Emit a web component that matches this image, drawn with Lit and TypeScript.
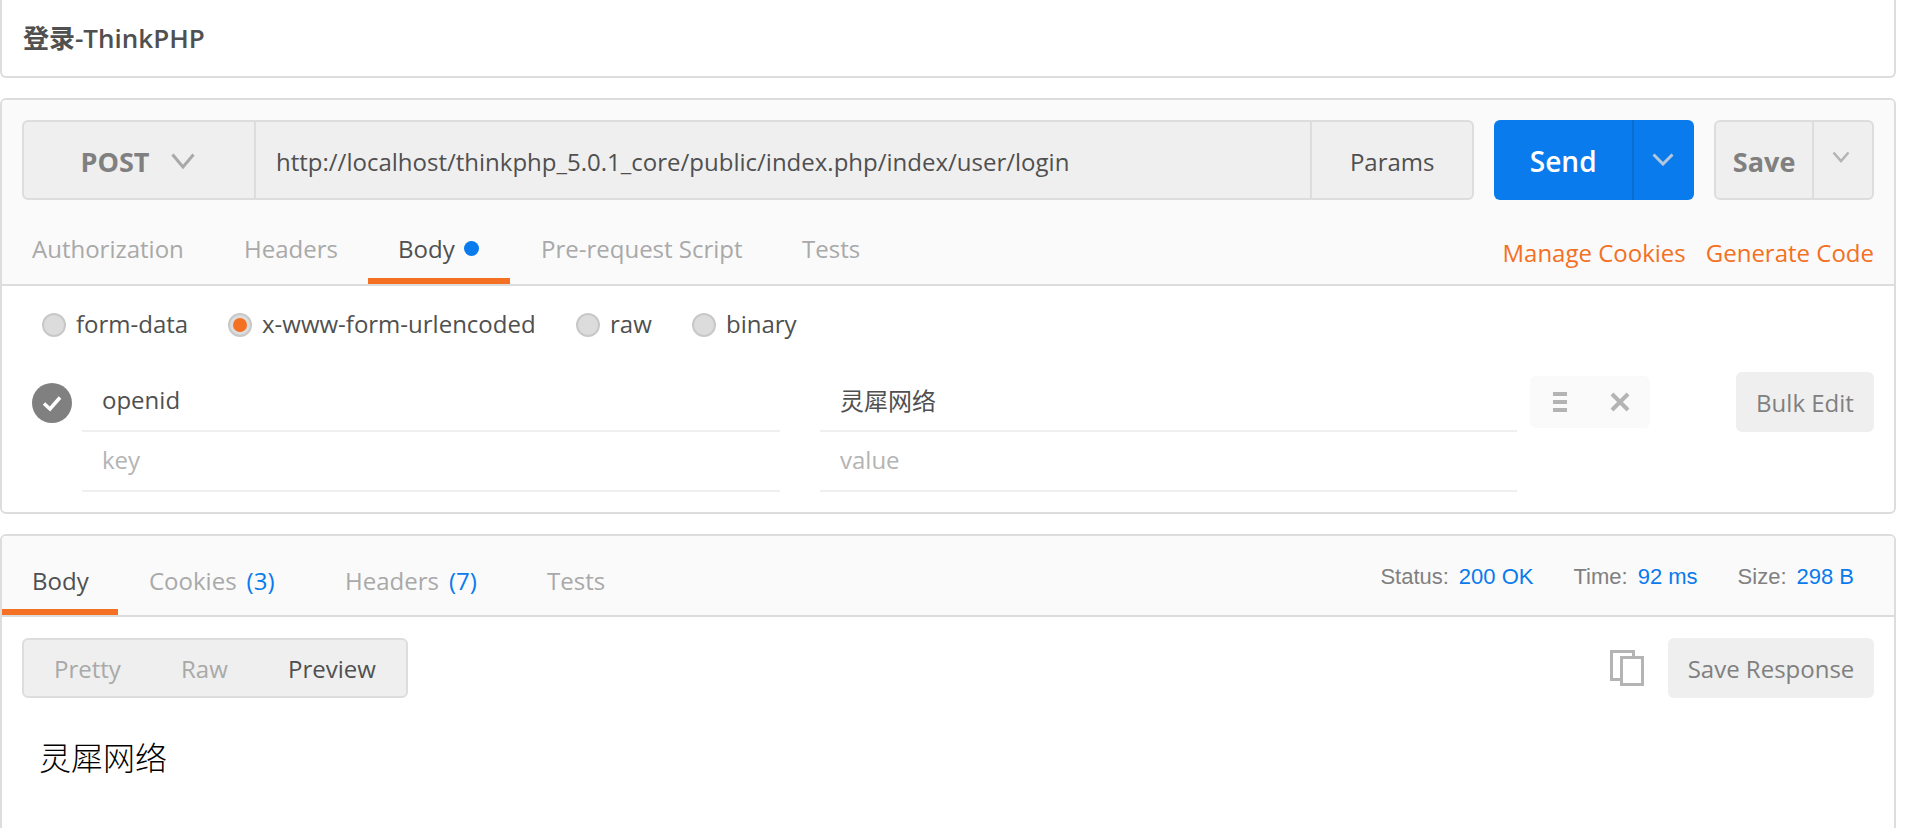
import { LitElement, html, css } from "lit";
import { customElement } from "lit/decorators.js";

const chev = (c: string, w: number, h: number, sw: number) => html`<svg width=${w} height=${h} viewBox="0 0 ${w} ${h}"><path d="M1.5 1.5 L${w / 2} ${h - 2} L${w - 1.5} 1.5" fill="none" stroke=${c} stroke-width=${sw}/></svg>`;

@customElement("app-root")
export class AppRoot extends LitElement {
  static styles = css`
    :host { display: block; width: 1918px; height: 828px; overflow: hidden; background: #fff; font-family: "Open Sans", "Noto Sans CJK SC", sans-serif; font-size: 24px; color: #505050; }
    * { box-sizing: border-box; }
    .page { width: 1896px; display: flex; flex-direction: column; gap: 20px; }
    .card { border: 2px solid #ddd; border-radius: 6px; }
    .title { height: 78px; border-top: none; border-top-left-radius: 0; border-top-right-radius: 0; padding-left: 21px; display: flex; align-items: center; font-size: 26px; font-weight: 600; color: #505050; padding-bottom: 3px; }
    .req { height: 416px; }
    .head { height: 186px; background: #fafafa; border-bottom: 2px solid #ddd; padding: 20px 20px 0 20px; border-radius: 4px 4px 0 0; }
    .bar { display: flex; height: 80px; }
    .urlbox { width: 1453px; display: flex; background: #efefef; border: 2px solid #ddd; border-radius: 6px; }
    .method { width: 232px; border-right: 2px solid #ddd; display: flex; align-items: center; justify-content: center; gap: 22px; font-size: 27px; font-weight: 700; color: #808080; padding: 2px 2px 0 0; }
    .url { flex: 1; display: flex; align-items: center; padding: 2px 0 0 20px; }
    .params { width: 162px; border-left: 2px solid #ddd; display: flex; align-items: center; justify-content: center; padding-top: 2px; }
    .send { margin-left: 20px; width: 200px; display: flex; background: #097bed; border-radius: 6px; color: #fff; font-weight: 600; font-size: 28px; }
    .send .l { width: 140px; display: flex; align-items: center; justify-content: center; border-right: 2px solid #0a6ed0; padding-top: 2px; }
    .send .r { flex: 1; display: flex; align-items: center; justify-content: center; padding: 0 2px 2px 0; }
    .save { margin-left: 20px; width: 160px; display: flex; background: #efefef; border: 2px solid #ddd; border-radius: 6px; color: #808080; font-weight: 700; font-size: 27px; }
    .save .l { width: 98px; display: flex; align-items: center; justify-content: center; border-right: 2px solid #ddd; padding-top: 2px; }
    .save .r { flex: 1; display: flex; align-items: center; justify-content: center; padding: 0 4px 6px 0; }
    .tabsrow { display: flex; justify-content: space-between; height: 84px; }
    .tabs { display: flex; }
    .tab { position: relative; display: flex; align-items: center; color: #a9a9a9; height: 84px; padding-top: 12px; white-space: nowrap; }
    .tab.on { color: #505050; }
    .tab.on::after { content: ""; position: absolute; left: 0; right: 0; bottom: 0; height: 6px; background: #f47023; }
    .t1 { margin-left: 10px; width: 212px; }
    .t2 { width: 124px; }
    .t3 { width: 142px; padding-left: 30px; gap: 9px; }
    .t4 { margin-left: 31px; width: 261px; }
    .dot { width: 15px; height: 15px; border-radius: 50%; background: #097bed; margin-top: 1px; }
    .links { display: flex; gap: 20px; color: #f47023; padding-top: 36px; line-height: 34px; white-space: nowrap; }
    .radios { display: flex; height: 78px; padding-left: 40px; align-items: center; }
    .radio { display: flex; align-items: center; gap: 10px; white-space: nowrap; line-height: 30px; }
    .radio .lbl { margin-top: -2px; }
    .r1 { width: 186px; }
    .r2 { width: 348px; }
    .r3 { width: 116px; }
    .rc { width: 24px; height: 24px; border-radius: 50%; background: #dcdcdc; border: 2px solid #c8c8c8; display: flex; align-items: center; justify-content: center; }
    .rc i { width: 14px; height: 14px; border-radius: 50%; background: #f47023; display: block; }
    .rows { display: flex; padding-left: 30px; height: 146px; margin-top: 5px; }
    .check { width: 40px; height: 40px; border-radius: 50%; background: #808080; margin-top: 14px; display: flex; align-items: center; justify-content: center; }
    .grid { margin-left: 10px; margin-top: 3px; display: grid; grid-template-columns: 698px 697px; column-gap: 40px; grid-auto-rows: 60px; align-content: start; }
    .cell { border-bottom: 2px solid #efefef; padding: 0 0 3px 20px; display: flex; align-items: center; height: 60px; white-space: nowrap; }
    .ph { color: #b4b4b4; }
    .actions { margin-left: 13px; margin-top: 7px; width: 120px; height: 52px; background: #fafafa; border-radius: 6px; display: flex; }
    .actions span { display: flex; align-items: center; justify-content: center; height: 100%; width: 60px; }
    .bulk { margin-left: 86px; margin-top: 3px; width: 138px; height: 60px; background: #efefef; border-radius: 6px; display: flex; align-items: center; justify-content: center; color: #808080; }
    .res { height: 400px; }
    .rhead { height: 81px; background: #fafafa; border-bottom: 2px solid #ddd; display: flex; justify-content: space-between; border-radius: 4px 4px 0 0; }
    .rtabs { display: flex; }
    .rtab { position: relative; display: flex; align-items: center; color: #a9a9a9; height: 79px; padding-top: 10px; white-space: nowrap; }
    .rtab.on { color: #505050; padding-left: 30px; width: 116px; }
    .rtab.on::after { content: ""; position: absolute; left: 0; right: 0; bottom: 0; height: 6px; background: #f47023; }
    .rtab b { font-weight: 400; color: #097bed; margin-left: 10px; }
    .rt2 { margin-left: 31px; width: 196px; }
    .rt3 { width: 202px; }
    .status { display: flex; align-items: center; padding: 2px 40px 0 0; font-family: "Liberation Sans", sans-serif; font-size: 22px; color: #808080; white-space: nowrap; }
    .status b { font-weight: 400; color: #097bed; margin-left: 10px; }
    .status span { margin-left: 40px; }
    .rbar { display: flex; justify-content: space-between; padding: 21px 20px 0 20px; }
    .seg { width: 386px; height: 60px; background: #efefef; border: 2px solid #ddd; border-radius: 6px; display: flex; align-items: center; color: #a9a9a9; }
    .seg span:nth-child(1) { margin-left: 30px; width: 127px; }
    .seg span:nth-child(2) { width: 107px; }
    .seg span:nth-child(3) { color: #505050; }
    .rright { display: flex; align-items: center; gap: 24px; }
    .saver { width: 206px; height: 60px; background: #efefef; border-radius: 6px; display: flex; align-items: center; justify-content: center; color: #808080; }
    .out { padding: 36px 0 0 37px; font-family: "Noto Sans CJK SC", serif; font-size: 32px; font-weight: 300; line-height: 44px; color: #000; }
  `;

  render() {
    return html`<div class="page">
      <div class="card title">登录-ThinkPHP</div>
      <div class="card req">
        <div class="head">
          <div class="bar">
            <div class="urlbox">
              <div class="method">POST ${chev("#a9a9a9", 24, 16, 3)}</div>
              <div class="url">http://localhost/thinkphp_5.0.1_core/public/index.php/index/user/login</div>
              <div class="params">Params</div>
            </div>
            <div class="send"><div class="l">Send</div><div class="r">${chev("#b4c8dc", 22, 13, 3)}</div></div>
            <div class="save"><div class="l">Save</div><div class="r">${chev("#b4b4b4", 18, 12, 2.5)}</div></div>
          </div>
          <div class="tabsrow">
            <div class="tabs">
              <div class="tab t1">Authorization</div>
              <div class="tab t2">Headers</div>
              <div class="tab t3 on">Body<span class="dot"></span></div>
              <div class="tab t4">Pre-request Script</div>
              <div class="tab">Tests</div>
            </div>
            <div class="links"><span>Manage Cookies</span><span>Generate Code</span></div>
          </div>
        </div>
        <div class="radios">
          <div class="radio r1"><span class="rc"></span><span class="lbl">form-data</span></div>
          <div class="radio r2"><span class="rc"><i></i></span><span class="lbl">x-www-form-urlencoded</span></div>
          <div class="radio r3"><span class="rc"></span><span class="lbl">raw</span></div>
          <div class="radio"><span class="rc"></span><span class="lbl">binary</span></div>
        </div>
        <div class="rows">
          <div class="check"><svg width="24" height="24" viewBox="0 0 24 24"><path d="M4 12.5 L10 18 L20 6.5" fill="none" stroke="#fff" stroke-width="3.5"/></svg></div>
          <div class="grid">
            <div class="cell">openid</div><div class="cell">灵犀网络</div>
            <div class="cell ph">key</div><div class="cell ph">value</div>
          </div>
          <div class="actions">
            <span><svg width="14" height="20" viewBox="0 0 14 20"><path d="M0 0h14v4H0zM0 8h14v4H0zM0 16h14v4H0z" fill="#b4b4b4"/></svg></span>
            <span><svg width="20" height="20" viewBox="0 0 20 20"><path d="M2 2 L18 18 M18 2 L2 18" stroke="#b4b4b4" stroke-width="4" fill="none"/></svg></span>
          </div>
          <div class="bulk">Bulk Edit</div>
        </div>
      </div>
      <div class="card res">
        <div class="rhead">
          <div class="rtabs">
            <div class="rtab on">Body</div>
            <div class="rtab rt2">Cookies<b>(3)</b></div>
            <div class="rtab rt3">Headers<b>(7)</b></div>
            <div class="rtab">Tests</div>
          </div>
          <div class="status"><span>Status:<b>200 OK</b></span><span>Time:<b>92 ms</b></span><span>Size:<b>298 B</b></span></div>
        </div>
        <div class="rbar">
          <div class="seg"><span>Pretty</span><span>Raw</span><span>Preview</span></div>
          <div class="rright">
            <svg width="34" height="36" viewBox="0 0 34 36"><path d="M1.5 1.5h22v28h-22z" fill="#fff" stroke="#b4b4b4" stroke-width="3"/><path d="M11.5 7.5h21v27h-21z" fill="#fff" stroke="#b4b4b4" stroke-width="3"/></svg>
            <div class="saver">Save Response</div>
          </div>
        </div>
        <div class="out">灵犀网络</div>
      </div>
    </div>`;
  }
}
